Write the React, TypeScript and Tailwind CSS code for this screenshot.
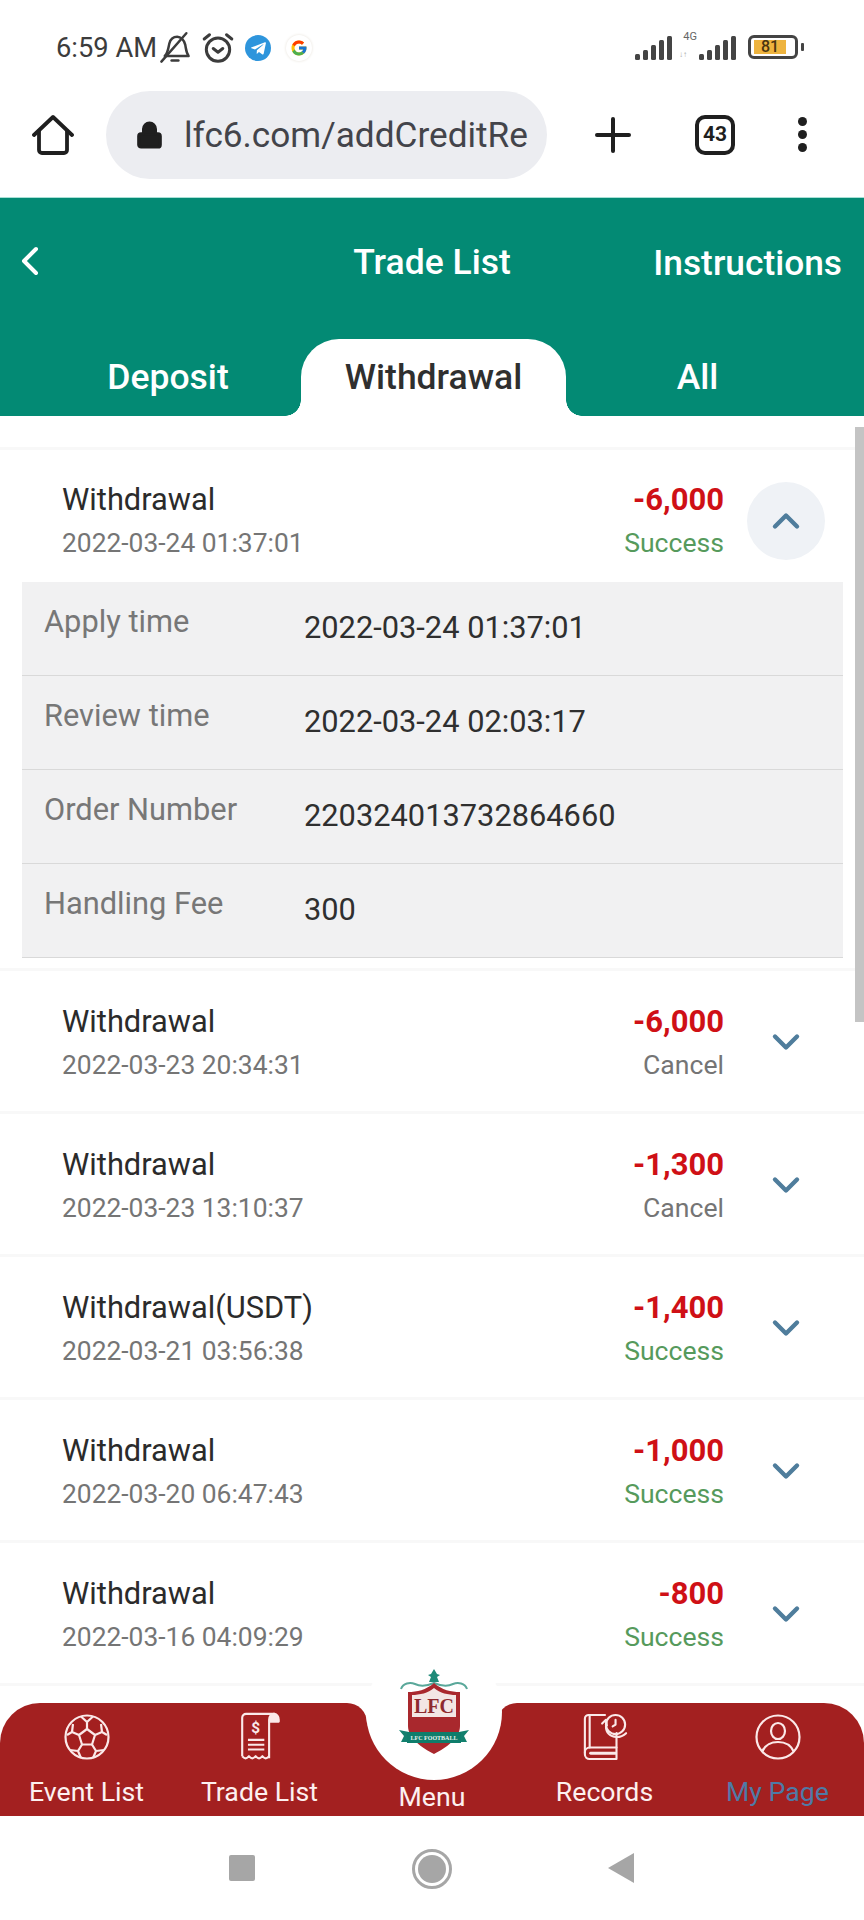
import { ChevronDown, ChevronLeft, ChevronUp, Lock } from "lucide-react";
import { FaTelegramPlane } from "react-icons/fa";
import { FcGoogle } from "react-icons/fc";

const rows = [
  { title: "Withdrawal", date: "2022-03-23 20:34:31", amount: "-6,000", status: "Cancel" },
  { title: "Withdrawal", date: "2022-03-23 13:10:37", amount: "-1,300", status: "Cancel" },
  { title: "Withdrawal(USDT)", date: "2022-03-21 03:56:38", amount: "-1,400", status: "Success" },
  { title: "Withdrawal", date: "2022-03-20 06:47:43", amount: "-1,000", status: "Success" },
  { title: "Withdrawal", date: "2022-03-16 04:09:29", amount: "-800", status: "Success" },
];

const details = [
  { label: "Apply time", value: "2022-03-24 01:37:01" },
  { label: "Review time", value: "2022-03-24 02:03:17" },
  { label: "Order Number", value: "220324013732864660" },
  { label: "Handling Fee", value: "300" },
];

const Signal = ({ className }: { className?: string }) => (
  <svg viewBox="0 0 38 24" className={className} fill="#444">
    <rect x="0" y="18" width="5" height="6" rx="1.5" />
    <rect x="8" y="14" width="5" height="10" rx="1.5" />
    <rect x="16" y="9" width="5" height="15" rx="1.5" />
    <rect x="24" y="4" width="5" height="20" rx="1.5" />
    <rect x="32" y="0" width="5" height="24" rx="1.5" />
  </svg>
);

const BellMuted = () => (
  <svg viewBox="0 0 30 30" className="w-[34px] h-[34px]" fill="none" stroke="#3c3c3c" strokeWidth="2.2" strokeLinejoin="round" strokeLinecap="round">
    <path d="M6 22c3-3 3-7 4-11 1-4 4-6 7-6s6 3 7 7c.8 4 .8 7 3 10H6z" />
    <path d="M12 26h6" />
    <path d="M3 27 25 2" />
  </svg>
);

const Alarm = () => (
  <svg viewBox="0 0 32 32" className="w-[34px] h-[34px]" fill="none" stroke="#3c3c3c" strokeWidth="2.8" strokeLinecap="round" strokeLinejoin="round">
    <circle cx="16" cy="17.5" r="11" />
    <path d="M11.5 16.5 16 20l4.5-3.5" />
    <path d="M3 7.5 8 3.5M29 7.5 24 3.5" />
  </svg>
);

const HomeIcon = () => (
  <svg viewBox="0 0 42 42" className="w-[42px] h-[42px]" fill="none" stroke="#1f1f1f" strokeWidth="3.8" strokeLinejoin="round" strokeLinecap="round">
    <path d="M2 21 21 3l19 18" />
    <path d="M7 17v19a3 3 0 0 0 3 3h22a3 3 0 0 0 3-3V17" />
  </svg>
);

const SoccerIcon = () => (
  <svg viewBox="0 0 46 46" className="w-[46px] h-[46px]" fill="none" stroke="#fbe9e9" strokeWidth="2.2" strokeLinejoin="round">
    <circle cx="23" cy="23" r="21.5" />
    <path d="M23 15l8 6-3 9.5H18L15 21z" />
    <path d="M23 15V8l-6-5.5M23 8l6-5.5M31 21l7-3 5 3M38 18l-1-8M28 30.5l4 6.5-3 7M32 37l8-1M18 30.5l-4 6.5 3 7M14 37l-8-1M15 21l-7-3-5 3M8 18l1-8" />
  </svg>
);

const ReceiptIcon = () => (
  <svg viewBox="0 0 44 52" className="w-[43px] h-[50px]" fill="none" stroke="#fbe9e9" strokeWidth="2.2" strokeLinejoin="round">
    <path d="M4 46V6a4 4 0 0 1 4-4h30" />
    <path d="M32 48V8c0-3 2-6 5-6s5 3 5 6v2h-10" fill="#fbe9e9" />
    <path d="M4 46c3 3 4 3 7 0 3 3 4 3 7 0 3 3 4 3 7 0 3 3 4 3 7 0" />
    <path d="M10 29h17M10 34h17M10 39h17" />
    <text x="18" y="22" fill="#fbe9e9" stroke="none" textAnchor="middle" fontSize="16" fontWeight="700" fontFamily="Roboto, sans-serif">$</text>
  </svg>
);

const RecordsIcon = () => (
  <svg viewBox="0 0 48 52" className="w-[46px] h-[50px]" fill="none" stroke="#fbe9e9" strokeWidth="2.2" strokeLinejoin="round" strokeLinecap="round">
    <path d="M24 3H7a4 4 0 0 0-4 4v37a5 5 0 0 0 5 5h28V22" />
    <path d="M3 42a5 5 0 0 1 5-5h28" />
    <path d="M8 3v34" />
    <path d="M9 43h26" strokeWidth="3" />
    <circle cx="35" cy="13" r="10" />
    <path d="M35 8v5l-3 2" />
    <path d="M25 15c0 6 4 11 11 11 5 0 8-2 10-4" />
    <path d="M21 12l4-4 1 6" />
  </svg>
);

const UserIcon = () => (
  <svg viewBox="0 0 46 46" className="w-[46px] h-[46px]" fill="none" stroke="#fbe9e9" strokeWidth="2.2">
    <circle cx="23" cy="23" r="21.5" />
    <ellipse cx="23" cy="17" rx="7" ry="8" />
    <path d="M7 38c3-7 9-10 16-10s13 3 16 10" />
  </svg>
);

const Logo = () => (
  <svg viewBox="0 0 70 96" className="w-[70px] h-[96px]">
    <path d="M35 1l3 5 3 1-3 2 2 5h-10l2-5-3-2 3-1z" fill="#1f8a78" />
    <path d="M2 21c2-6 9-7 14-5 6 3 12 2 19-1 7 3 13 4 19 1 5-2 12-1 14 5" fill="none" stroke="#5aa89a" strokeWidth="2" />
    <path d="M9 24c9 0 18-2 26-9 8 7 17 9 26 9v34c0 12-14 22-26 28C23 80 9 70 9 58z" fill="#a9282d" />
    <path d="M13 27c8 0 16-2 22-7 6 5 14 7 22 7v22H13z" fill="#f3e6e4" />
    <text x="35" y="45" textAnchor="middle" fontSize="20" fontWeight="700" fill="#8e2a2e" fontFamily="'Liberation Serif', serif">LFC</text>
    <path d="M0 62l10 2v10L2 74l3-6zM70 62l-10 2v10l8 0-3-6z" fill="#12806e" />
    <rect x="8" y="64" width="54" height="11" fill="#0f7d6b" />
    <text x="35" y="72" textAnchor="middle" fontSize="6" fontWeight="700" fill="#e8f3f0" fontFamily="'Liberation Serif', serif">LFC FOOTBALL</text>
  </svg>
);

const NavItem = ({ icon, label, active }: { icon: React.ReactNode; label: string; active?: boolean }) => (
  <div className="w-[173px] flex flex-col items-center">
    <div className="h-[50px] flex items-center justify-center">{icon}</div>
    <span className={`mt-[15px] text-[26.7px] leading-[30px] ${active ? "text-[#4f7aa6]" : "text-[#fdf0f0]"}`}>{label}</span>
  </div>
);

export default function App() {
  return (
    <div className="w-[864px] h-[1920px] bg-white overflow-hidden flex flex-col relative font-['Roboto',sans-serif]">
      {/* status bar */}
      <div className="h-[91px] shrink-0 flex items-start justify-between pl-[56px] pr-[66px] pt-[32px]">
        <div className="flex items-center h-[32px]">
          <span className="text-[27.3px] text-[#3c3c3c]">6:59 AM</span>
          <span className="ml-[1px]"><BellMuted /></span>
          <span className="ml-[9px]"><Alarm /></span>
          <span className="ml-[10px] w-[26px] h-[26px] rounded-full bg-[#2e95dc] flex items-center justify-center text-white">
            <FaTelegramPlane className="w-[17px] h-[17px]" />
          </span>
          <span className="ml-[15px] w-[26px] h-[26px] rounded-full bg-white shadow-[0_0_3px_#e6e0d8] flex items-center justify-center">
            <FcGoogle className="w-[18px] h-[18px]" />
          </span>
        </div>
        <div className="flex items-end h-[28px]">
          <Signal className="w-[38px] h-[24px]" />
          <div className="w-[25px] h-[24px] ml-[1px] relative">
            <span className="absolute right-[2px] top-[-5px] text-[11px] leading-[12px] text-[#666]">4G</span>
            <span className="absolute left-[5px] bottom-[1px] text-[8px] leading-[8px] text-[#aaa]">↓↑</span>
          </div>
          <Signal className="w-[38px] h-[24px]" />
          <div className="ml-[11px] mb-[1px] w-[50px] h-[24px] rounded-[6px] border-[3px] border-[#444] relative flex items-center pl-[3px]">
            <span className="w-[32px] h-[14px] bg-[#eeb43f] text-[16px] leading-[14px] font-medium text-[#4a3410] text-center">81</span>
            <span className="absolute right-[-9px] top-[5px] w-[3px] h-[8px] bg-[#444] rounded-[1px]" />
          </div>
        </div>
      </div>

      {/* browser bar */}
      <div className="h-[106px] shrink-0 flex items-start relative">
        <div className="ml-[32px] mt-[23px]"><HomeIcon /></div>
        <div className="ml-[32px] w-[441px] h-[88px] rounded-[44px] bg-[#ecedf1] flex items-center pl-[29px] overflow-hidden">
          <Lock className="w-[29px] h-[32px] text-[#1f1f1f] fill-[#1f1f1f] shrink-0" strokeWidth={2.4} />
          <span className="ml-[20px] text-[35.2px] text-[#43444a] whitespace-nowrap">lfc6.com/addCreditRe</span>
        </div>
        <div className="ml-[48px] mt-[26px] w-[36px] h-[36px] relative">
          <span className="absolute left-0 top-[16px] w-[36px] h-[4px] rounded bg-[#1f1f1f]" />
          <span className="absolute left-[16px] top-0 w-[4px] h-[36px] rounded bg-[#1f1f1f]" />
        </div>
        <div className="ml-[64px] mt-[24px] w-[40px] h-[40px] rounded-[10px] border-[4px] border-[#1f1f1f] flex items-center justify-center text-[21px] font-bold text-[#1f1f1f]">43</div>
        <div className="ml-[63px] mt-[26px] flex flex-col gap-[4px]">
          <span className="w-[9px] h-[9px] rounded-full bg-[#1f1f1f]" />
          <span className="w-[9px] h-[9px] rounded-full bg-[#1f1f1f]" />
          <span className="w-[9px] h-[9px] rounded-full bg-[#1f1f1f]" />
        </div>
      </div>

      {/* teal header */}
      <div className="h-[219px] shrink-0 bg-[#038a74] border-t-[1px] border-[#a8e0d6] relative">
        <div className="h-[141px] relative flex items-center justify-center pb-[12px]">
          <ChevronLeft className="absolute left-[6px] top-[39px] w-[48px] h-[48px] text-white" strokeWidth={2} />
          <span className="text-[35.5px] font-medium text-white">Trade List</span>
          <span className="absolute right-[22px] top-[39px] text-[35.3px] font-medium text-white">Instructions</span>
        </div>
        <div className="flex h-[77px] text-[35.5px] font-medium">
          <div className="w-[301px] flex items-center justify-center pl-[35px] text-white">Deposit</div>
          <div className="w-[265px] relative bg-white rounded-t-[38px] flex items-center justify-center text-[#2f2f2f]">
            Withdrawal
            <span className="absolute left-[-16px] bottom-0 w-[16px] h-[16px] bg-[radial-gradient(circle_at_0_0,#038a74_15.5px,#ffffff_16px)]" />
            <span className="absolute right-[-16px] bottom-0 w-[16px] h-[16px] bg-[radial-gradient(circle_at_100%_0,#038a74_15.5px,#ffffff_16px)]" />
          </div>
          <div className="flex-1 flex items-center justify-center pr-[35px] text-white">All</div>
        </div>
      </div>

      {/* list */}
      <div className="flex-1 relative overflow-hidden pt-[31px] bg-white">
        <div className="absolute right-0 top-[11px] w-[9px] h-[595px] bg-[#c4c4c4]" />
        <div className="border-t-[3px] border-[#f8f8f8]">
          <div className="h-[132px] pl-[62px] pr-[39px] flex items-start pt-[32px]">
            <div className="flex-1">
              <div className="text-[30.8px] leading-[36px] text-[#2b2b2b]">Withdrawal</div>
              <div className="mt-[7px] text-[26.4px] leading-[36px] text-[#757575]">2022-03-24 01:37:01</div>
            </div>
            <div className="text-right">
              <div className="text-[31px] leading-[36px] font-bold text-[#cf1016]">-6,000</div>
              <div className="mt-[7px] text-[26.6px] leading-[36px] text-[#569a5c]">Success</div>
            </div>
            <div className="ml-[23px] w-[78px] h-[78px] mt-0 shrink-0 rounded-full bg-[#eff2f6] flex items-center justify-center">
              <ChevronUp className="w-[44px] h-[44px] text-[#4f7d9c]" strokeWidth={2.4} />
            </div>
          </div>
          <div className="mx-[22px] w-[821px] bg-[#f1f1f2]">
            {details.map((d) => (
              <div key={d.label} className="h-[94px] flex items-start border-b border-[#d9d9d9] pl-[22px] pt-[22px]">
                <span className="w-[260px] text-[30.8px] leading-[36px] text-[#777777]">{d.label}</span>
                <span className="text-[30.8px] leading-[36px] mt-[6px] text-[#2f2f2f]">{d.value}</span>
              </div>
            ))}
          </div>
        </div>

        <div className="mt-[10px]">
          {rows.map((r, i) => (
            <div key={i} className="h-[143px] pl-[62px] pr-[39px] flex items-start pt-[33px] border-t-[3px] border-[#f8f8f8]">
              <div className="flex-1">
                <div className="text-[30.8px] leading-[36px] text-[#2b2b2b]">{r.title}</div>
                <div className="mt-[7px] text-[26.4px] leading-[36px] text-[#757575]">{r.date}</div>
              </div>
              <div className="text-right">
                <div className="text-[31px] leading-[36px] font-bold text-[#cf1016]">{r.amount}</div>
                <div className={`mt-[7px] text-[26.6px] leading-[36px] ${r.status === "Success" ? "text-[#569a5c]" : "text-[#757575]"}`}>{r.status}</div>
              </div>
              <div className="ml-[23px] w-[78px] h-[78px] mt-[-1px] shrink-0 flex items-center justify-center">
                <ChevronDown className="w-[44px] h-[44px] text-[#4f7d9c]" strokeWidth={2.4} />
              </div>
            </div>
          ))}
          <div className="border-t-[3px] border-[#f8f8f8]" />
        </div>
      </div>

      {/* bottom nav - sits over the list */}
      <div className="absolute left-0 top-[1703px] w-[864px] h-[113px] flex">
        <div className="w-[367px] bg-[#a32020] rounded-tl-[40px] rounded-tr-[20px] flex pt-[9px]">
          <NavItem icon={<SoccerIcon />} label="Event List" />
          <NavItem icon={<ReceiptIcon />} label="Trade List" />
        </div>
        <div className="w-[130px] mt-[9px] bg-[#a32020] relative flex flex-col items-center justify-end pb-[4px]">
          <span className="text-[26.7px] leading-[30px] text-[#fdf0f0]">Menu</span>
        </div>
        <div className="w-[367px] bg-[#a32020] rounded-tr-[40px] rounded-tl-[20px] flex pt-[9px] pl-[21px]">
          <NavItem icon={<RecordsIcon />} label="Records" />
          <NavItem icon={<UserIcon />} label="My Page" active />
        </div>
      </div>
      <div className="absolute left-[366px] top-[1644px] w-[136px] h-[136px] rounded-full bg-white flex items-start justify-center pt-[24px]">
        <Logo />
      </div>

      {/* android nav */}
      <div className="absolute left-0 top-[1816px] w-[864px] h-[104px] bg-white flex items-start pt-[39px] pl-[229px]">
        <span className="w-[26px] h-[26px] bg-[#a6a6a6] rounded-[2px]" />
        <span className="ml-[157px] mt-[-6px] w-[40px] h-[40px] rounded-full border-[3px] border-[#a6a6a6] flex items-center justify-center">
          <span className="w-[28px] h-[28px] rounded-full bg-[#a6a6a6]" />
        </span>
        <svg viewBox="0 0 26 30" className="ml-[156px] mt-[-2px] w-[26px] h-[30px]" fill="#a6a6a6"><path d="M26 0v30L0 15z" /></svg>
      </div>
    </div>
  );
}
